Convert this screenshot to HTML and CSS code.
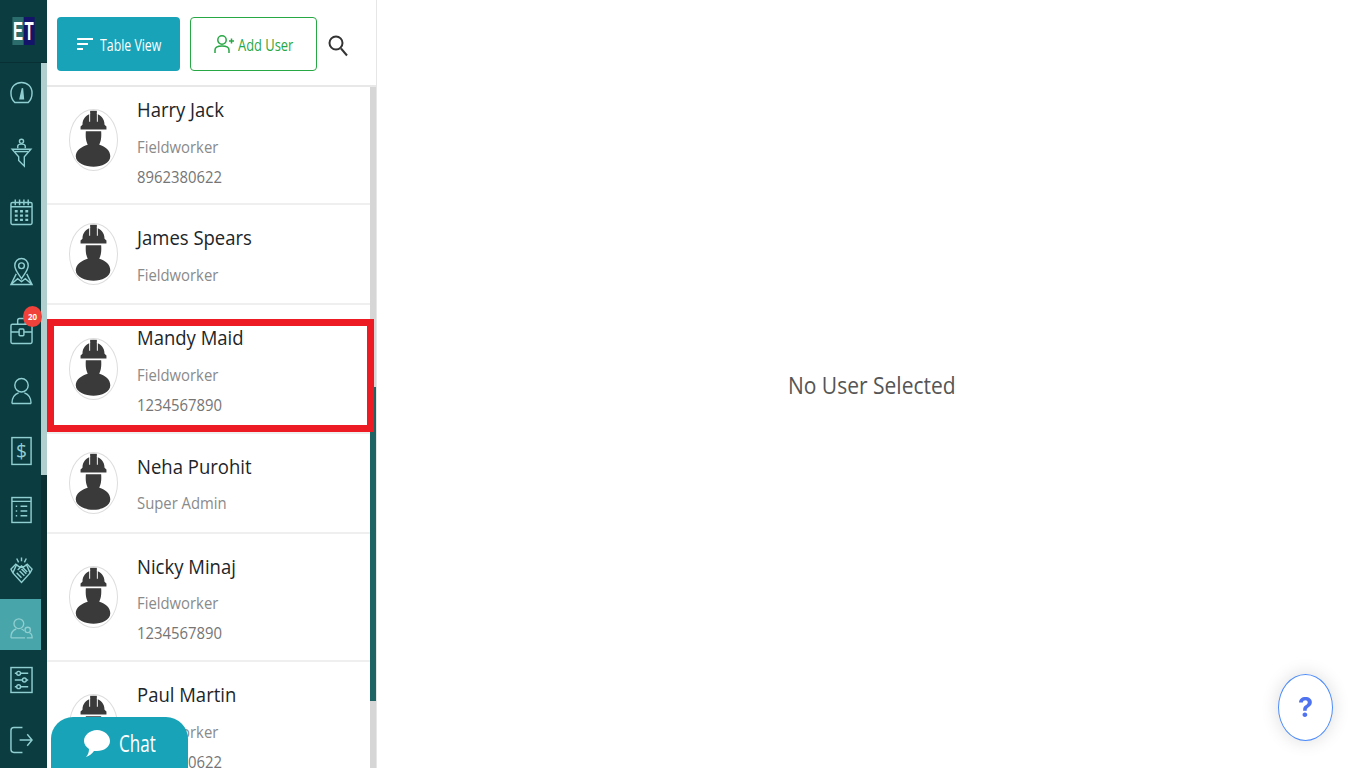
FILE: index.html
```html
<!DOCTYPE html>
<html lang="en">
<head>
<meta charset="utf-8">
<title>Users</title>
<link rel="stylesheet" href="styles.css">
</head>
<body>
<svg class="sprite" aria-hidden="true">
  <symbol id="worker" viewBox="0 0 49 62">
    <path fill="#3a3a3a" d="M13 15 C13 9 17 5 21 4 L21 0.500 L28 0.500 L28 4 C32 5 36 9 36 15 L38 17 L38 20 L11 20 L11 17 Z"/>
    <path fill="#3a3a3a" d="M16.500 22 L32.500 22 C33 29 32 33 30.500 36 C37 38 42 42 42 48 C42 55 33 59 24.500 59 C16 59 6 55 6 48 C6 42 12 38 18.500 36 C17 33 16 29 16.500 22 Z"/>
    <path fill="#fff" d="M20 3 h1 v9 h-1 Z M28 3 h1 v9 h-1 Z"/>
  </symbol>
</svg>
<div class="app">
  <aside class="rail">
    <div class="logo"><div class="logo-mark"><span class="logo-e">E</span><span class="logo-t">T</span></div></div>
    <div class="rail-scroll">
      <nav class="rail-items">
        <a class="rail-item"><svg class="ic" viewBox="0 0 24 30"><path d="M5 25 H19 C21 23 23 20 23 15 C23 8 18 4 12 4 C6 4 1 8 1 15 C1 20 3 23 5 25 Z"/><path class="solid" d="M10.500 21 L13 10 L14 21 Z"/></svg></a>
        <a class="rail-item"><svg class="ic" viewBox="0 0 24 32"><circle cx="12" cy="3.500" r="2.200"/><path d="M8 11 V8.500 C8 7 10 6.500 12 6.500 C14 6.500 16 7 16 8.500 V11"/><path d="M2 12 H22 L15 20 V30 L9 24 V20 Z"/><path d="M5 14.500 H19"/></svg></a>
        <a class="rail-item"><svg class="ic" viewBox="0 0 24 28"><rect x="1" y="4" width="22" height="23" rx="1.500"/><path d="M1 8.500 H23 M5.500 1 V7 M10 1 V7 M14.500 1 V7 M19 1 V7"/><path class="solid nostroke" d="M5 12 h3 v2.500 h-3 Z M10.500 12 h3 v2.500 h-3 Z M16 12 h3 v2.500 h-3 Z M5 16.500 h3 v2.500 h-3 Z M10.500 16.500 h3 v2.500 h-3 Z M16 16.500 h3 v2.500 h-3 Z M5 21 h3 v2.500 h-3 Z M10.500 21 h3 v2.500 h-3 Z M16 21 h3 v2.500 h-3 Z"/></svg></a>
        <a class="rail-item"><svg class="ic" viewBox="0 0 24 30"><path d="M12 22 C9 17 5 13 5 8.500 C5 4 8 1 12 1 C16 1 19 4 19 8.500 C19 13 15 17 12 22 Z"/><circle cx="12" cy="8.500" r="3"/><path d="M6.500 17 L1 28 H23 L17.500 17 M1 28 L8 22 L12 25 L16 22 L23 28"/></svg></a>
        <a class="rail-item badge-host"><svg class="ic" viewBox="0 0 24 28"><rect x="1" y="7" width="22" height="20" rx="1.500"/><path d="M8 7 V3 C8 2 9 1 10 1 H14 C15 1 16 2 16 3 V7"/><path d="M1 15 H9.500 M14.500 15 H23"/><rect x="9.500" y="12" width="5" height="7" rx="1"/></svg><span class="badge">20</span></a>
        <a class="rail-item"><svg class="ic" viewBox="0 0 24 28"><circle cx="12" cy="8" r="7"/><path d="M2 27 C2 20 6 17 9 16 M22 27 C22 20 18 17 15 16 M2 27 H22"/></svg></a>
        <a class="rail-item"><svg class="ic" viewBox="0 0 24 30"><rect x="2" y="1" width="20" height="28"/><text class="ic-text" x="12" y="22" text-anchor="middle">$</text></svg></a>
        <a class="rail-item"><svg class="ic" viewBox="0 0 24 28"><rect x="2" y="1" width="20" height="26"/><path d="M2 5 H22 M6 10 h1.500 M11 10 H18 M6 15 h1.500 M11 15 H18 M6 20 h1.500 M11 20 H18"/></svg></a>
        <a class="rail-item"><svg class="ic" viewBox="0 0 24 28"><path d="M12 1 V5 M7 2 L9 6 M17 2 L15 6"/><path d="M6 8 L1 13 L3 17 L12 27 L21 17 L23 13 L18 8 L14 11 L12 10 L10 11 Z"/><path d="M3 17 L7 8 M21 17 L17 8 M8 14 L12 10 L18 16 M7 17 L12 22 M10 15 L15 20 M12 13 L17 18"/></svg></a>
        <a class="rail-item selected"><svg class="ic" viewBox="0 0 26 26"><circle cx="10" cy="7" r="5.500"/><path d="M1 23 C1 17 4 14 7 13 M13 13 C14 13.500 15 14 16 15 M1 23 H17"/><circle cx="20" cy="14" r="3"/><path d="M19 23 H25 C25 20 24 18 22 17.500"/></svg></a>
      </nav>
      <div class="rail-bar"><div class="rail-thumb"></div></div>
    </div>
    <div class="rail-bottom">
      <a class="rail-item"><svg class="ic" viewBox="0 0 24 28"><rect x="1" y="1" width="22" height="26"/><path d="M5 7 H7 M11 7 H19 M5 14 H13 M17 14 H19 M5 21 H7 M11 21 H19"/><circle cx="9" cy="7" r="2"/><circle cx="15" cy="14" r="2"/><circle cx="9" cy="21" r="2"/></svg></a>
      <a class="rail-item"><svg class="ic" viewBox="0 0 24 28"><path d="M13 1 H4 C2 1 1 2 1 4 V24 C1 26 2 27 4 27 H13"/><path d="M10 14 H23 M18 8 L23 14 L18 20"/></svg></a>
    </div>
  </aside>

  <section class="panel">
    <header class="toolbar">
      <button class="btn btn-teal">
        <svg class="btn-ic" viewBox="0 0 16 14"><path d="M0 2 H16 M0 7 H11 M0 12 H6"/></svg>
        <span>Table View</span>
      </button>
      <button class="btn btn-outline">
        <svg class="btn-ic user" viewBox="0 0 20 20"><circle cx="8" cy="6" r="4.200"/><path d="M1 19 V16 C1 13 4 12 8 12 C12 12 15 13 15 16 V19"/><path d="M15 7 H20 M17.500 4.500 V9.500"/></svg>
        <span>Add User</span>
      </button>
      <svg class="search" viewBox="0 0 20 22"><circle cx="8" cy="8.500" r="6.500"/><path d="M13 14 L19 21"/></svg>
    </header>
    <div class="panel-body">
      <div class="list-clip">
        <ul class="list">
          <li class="row"><svg class="avatar"><use href="#worker"/></svg><div class="info"><p class="name">Harry Jack</p><p class="role">Fieldworker</p><p class="phone">8962380622</p></div></li>
          <li class="row short"><svg class="avatar"><use href="#worker"/></svg><div class="info"><p class="name">James Spears</p><p class="role">Fieldworker</p></div></li>
          <li class="row"><svg class="avatar"><use href="#worker"/></svg><div class="info"><p class="name">Mandy Maid</p><p class="role">Fieldworker</p><p class="phone">1234567890</p></div></li>
          <li class="row short"><svg class="avatar"><use href="#worker"/></svg><div class="info"><p class="name">Neha Purohit</p><p class="role">Super Admin</p></div></li>
          <li class="row"><svg class="avatar"><use href="#worker"/></svg><div class="info"><p class="name">Nicky Minaj</p><p class="role">Fieldworker</p><p class="phone">1234567890</p></div></li>
          <li class="row"><svg class="avatar"><use href="#worker"/></svg><div class="info"><p class="name">Paul Martin</p><p class="role">Fieldworker</p><p class="phone">8962380622</p></div></li>
        </ul>
      </div>
      <div class="list-bar"><div class="list-thumb"></div></div>
    </div>
    <div class="highlight"></div>
    <button class="chat">
      <svg class="chat-ic" viewBox="0 0 26 28"><path d="M13 1 C20 1 26 6 26 12 C26 18 20 22 13 22 C12 22 11 22 10 22 C8 25 5 27 2 28 C4 26 5 23 5 20 C2 18 0 15 0 12 C0 6 6 1 13 1 Z"/></svg>
      <span>Chat</span>
    </button>
  </section>

  <main class="content">
    <p class="empty">No User Selected</p>
  </main>
</div>
<button class="help">?</button>
</body>
</html>
```

FILE: styles.css
```css
* { box-sizing: border-box; }
html, body { margin: 0; height: 100%; overflow: hidden; background: #fff; }
body { font-family: "Open Sans", "Liberation Sans", sans-serif; }
p, ul { margin: 0; padding: 0; }
.sprite { display: none; }

.app { display: flex; height: 768px; }

.rail { width: 47px; flex: none; display: flex; flex-direction: column; background: #0b3c40; }
.logo { height: 63px; flex: none; display: flex; align-items: center; justify-content: center; border-bottom: 1px solid #083034; padding-bottom: 1px; }
.logo-mark { display: flex; flex: none; transform: scaleX(.6); font-weight: 700; font-size: 25px; line-height: 28px; color: #fff; font-family: "Liberation Sans", sans-serif; }
.logo-mark span { display: block; width: 18.500px; height: 28px; text-align: center; }
.logo-e { background: #2b6c6c; }
.logo-t { background: #14146b; }
.rail-scroll { height: 587px; flex: none; display: flex; }
.rail-items { width: 41px; flex: none; display: flex; flex-direction: column; gap: 8.6px; }
.rail-item { height: 51px; flex: none; display: flex; align-items: center; justify-content: center; position: relative; padding: 9px 0 0 2px; }
.rail-item.selected { background: #48a5a9; }
.rail-bar { width: 6px; background: #0a3034; }
.rail-thumb { height: 412px; background: #b1cfcf; }
.rail-bottom { display: flex; flex-direction: column; gap: 8.6px; width: 41px; }
.ic { width: 23px; height: 30px; fill: none; stroke: #8fced1; stroke-width: 1.500; overflow: visible; }
.ic .solid { fill: #8fced1; }
.ic .nostroke { stroke: none; }
.ic-text { fill: #8fced1; stroke: none; font-size: 20px; font-family: "Open Sans", sans-serif; }
.badge { position: absolute; top: 5px; left: 23px; width: 19px; height: 21px; border-radius: 50%; background: #f0413a; color: #fff; font-size: 8px; font-weight: 700; line-height: 21px; text-align: center; }

.panel { width: 330px; flex: none; position: relative; display: flex; flex-direction: column; border-right: 1px solid #e6e6e6; }
.toolbar { height: 87px; flex: none; display: flex; align-items: flex-start; padding: 17px 0 0 10px; gap: 10px; border-bottom: 2px solid #e8e8e8; background: #fff; position: relative; z-index: 1; }
.btn { height: 54px; display: flex; align-items: center; justify-content: center; border-radius: 4px; font-family: inherit; font-size: 16px; cursor: pointer; padding: 0; }
.btn span { display: block; margin-top: 2px; transform-origin: left center; white-space: nowrap; text-align: left; }
.btn-teal { width: 123px; gap: 7px; padding-left: 2px; background: #19a3b8; border: 0; color: #fff; }
.btn-teal span { width: 62px; transform: scaleX(.77); }
.btn-outline { width: 127px; gap: 4px; background: #fff; border: 1px solid #28a745; color: #28a745; }
.btn-outline span { width: 55px; transform: scaleX(.806); }
.btn-ic { width: 16px; height: 14px; fill: none; stroke: #fff; stroke-width: 2; }
.btn-ic.user { width: 20px; height: 20px; stroke: #28a745; stroke-width: 1.500; }
.search { width: 20px; height: 23px; margin: 17px 0 0 1px; fill: none; stroke: #333; stroke-width: 2; }

.panel-body { flex: 1; min-height: 0; display: flex; }
.list-clip { width: 323px; flex: none; overflow: hidden; }
.list { list-style: none; margin-top: -10px; }
.row { height: 128.4px; display: flex; align-items: center; border-bottom: 2px solid #efefef; padding-left: 22px; gap: 19px; }
.row.short { height: 100px; }
.avatar { width: 49px; height: 62px; flex: none; border: 1px solid #ddd; border-radius: 50%; }
.info { align-self: flex-start; margin-top: 19px; }
.info p { transform-origin: left center; white-space: nowrap; }
.name { font-size: 20px; line-height: 28px; color: #212529; margin-bottom: 11.500px; transform: scaleX(.925); }
.role, .phone { font-size: 16.500px; line-height: 22px; margin-bottom: 8px; transform: scaleX(.9); }
.role { color: #8a8a8a; }
.phone { color: #757575; }

.list-bar { width: 6px; flex: none; background: #d6d6d6; }
.list-thumb { height: 314px; margin-top: 300px; background: #1f6464; }

.highlight { position: absolute; left: 0; top: 319px; width: 327px; height: 113px; border: 7px solid #ed1c24; z-index: 2; }
.chat { position: absolute; left: 4px; top: 717px; width: 137px; height: 51px; border: 0; border-radius: 22px 22px 0 0; background: #19a3b8; color: #fff; font-family: inherit; font-size: 24px; display: flex; align-items: center; justify-content: center; gap: 9px; padding: 0 0 0 2px; z-index: 3; }
.chat span { display: block; width: 38px; transform: scaleX(.71); transform-origin: left center; }
.chat-ic { width: 26px; height: 28px; fill: #fff; }

.content { flex: 1; display: flex; justify-content: center; padding-top: 370px; }
.empty { font-size: 24px; line-height: 30px; color: #555; height: 30px; white-space: nowrap; transform: scaleX(.875); }

.help { position: fixed; left: 1278px; top: 674px; width: 55px; height: 67px; border-radius: 50%; border: 1.500px solid #4f8dfb; background: #fff; color: #4f73f0; font-family: "Inter", sans-serif; font-weight: 700; font-size: 27px; padding: 0; box-shadow: 0 0 18px rgba(0,0,0,.14); }
```
